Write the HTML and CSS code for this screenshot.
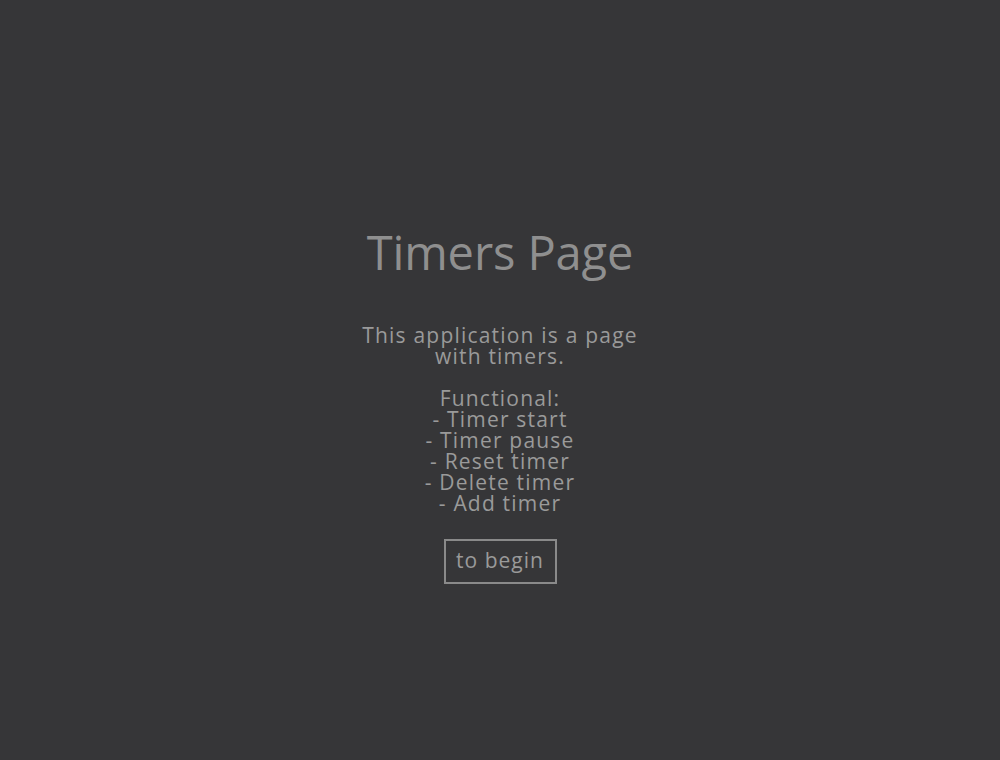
FILE: index.html
```html
<!DOCTYPE html>
<html>
<head>
<meta charset="utf-8">
<link rel="stylesheet" href="styles.css">
</head>
<body>
<main class="page">
  <h1 class="title">Timers Page</h1>
  <p class="desc">This application is a page
with timers.

Functional:
- Timer start
- Timer pause
- Reset timer
- Delete timer
- Add timer</p>
  <button class="begin">to begin</button>
</main>
</body>
</html>
```

FILE: styles.css
```css
html, body {
  margin: 0;
  height: 100%;
  background: #363638;
}
.page {
  height: 100%;
  display: flex;
  flex-direction: column;
  align-items: center;
  padding-top: 225px;
  box-sizing: border-box;
  font-family: "Open Sans", sans-serif;
  color: #9a9a9a;
}
.title {
  margin: 0;
  font-size: 47px;
  font-weight: 400;
  line-height: 54px;
  letter-spacing: -0.1px;
  color: #8f8f8f;
}
.desc {
  margin: 46px 0 0;
  font-size: 21px;
  line-height: 21px;
  letter-spacing: 1.2px;
  white-space: pre-line;
  text-align: center;
}
.begin {
  margin-top: 25px;
  width: 113px;
  height: 45px;
  background: transparent;
  border: 2px solid #8a8a8a;
  color: #9a9a9a;
  font-family: "Open Sans", sans-serif;
  font-size: 21px;
  letter-spacing: 1px;
  padding: 0 0 4px;
}
```
